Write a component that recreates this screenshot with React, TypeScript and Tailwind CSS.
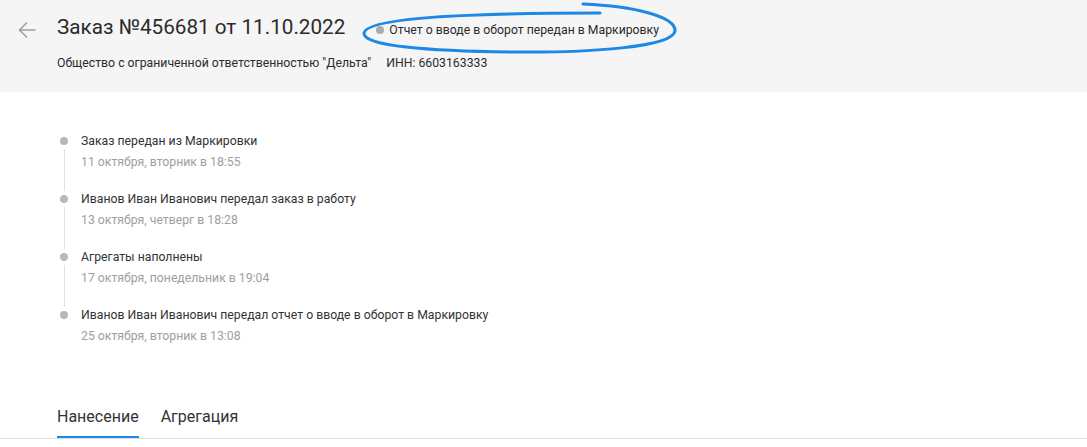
import React from "react";

const events = [
  { title: "Заказ передан из Маркировки", date: "11 октября, вторник в 18:55" },
  { title: "Иванов Иван Иванович передал заказ в работу", date: "13 октября, четверг в 18:28" },
  { title: "Агрегаты наполнены", date: "17 октября, понедельник в 19:04" },
  {
    title: "Иванов Иван Иванович передал отчет о вводе в оборот в Маркировку",
    date: "25 октября, вторник в 13:08",
  },
];

function BackArrow() {
  return (
    <svg width="18" height="16" viewBox="0 0 18 16" fill="none" stroke="#9e9e9e" strokeWidth="1.5" strokeLinecap="round" strokeLinejoin="round">
      <path d="M1.5 8H17" />
      <path d="M8.5 1L1.5 8L8.5 15" />
    </svg>
  );
}

export default function App() {
  return (
    <div className="relative h-[447px] w-[1087px] overflow-hidden bg-white font-['Roboto',sans-serif] text-[#2b2b2b]">
      {/* шапка заказа */}
      <header className="flex h-[92px] bg-[#f5f5f5]">
        <button className="ml-[18px] mt-[22px] h-[16px]">
          <BackArrow />
        </button>
        <div className="ml-[21px] pt-[13px]">
          <div className="flex items-baseline">
            <h1 className="text-[20.7px] leading-[28px]">Заказ №456681 от 11.10.2022</h1>
            <span className="ml-[31px] flex items-baseline text-[12.25px] leading-[20px]">
              <span className="mr-[5px] inline-block h-[8px] w-[8px] rounded-full bg-[#aaaaaa]" />
              Отчет о вводе в оборот передан в Маркировку
            </span>
          </div>
          <div className="mt-[12px] flex text-[12.25px] leading-[20px]">
            <span>Общество с ограниченной ответственностью "Дельта"</span>
            <span className="ml-[15px]">ИНН: 6603163333</span>
          </div>
        </div>
      </header>

      {/* пометка от руки */}
      <svg className="pointer-events-none absolute left-0 top-0" width="1087" height="92" fill="none">
        <path
          d="M583 4 C635 6 676 17 675 31 C673 47 590 53 510 52 C430 51 362 46 364 33 C366 20 440 13 600 13"
          stroke="#1e88e5"
          strokeWidth="3"
          strokeLinecap="round"
        />
      </svg>

      {/* история */}
      <ul className="ml-[60px] mt-[39px]">
        {events.map((ev, i) => (
          <li key={i} className="flex">
            <div className="flex w-[8px] flex-col items-center">
              <span className="mt-[6px] h-[8px] w-[8px] rounded-full bg-[#b8b8b8]" />
              {i < events.length - 1 && <span className="-mb-[2px] mt-[4px] w-px flex-1 bg-[#e0e0e0]" />}
            </div>
            <div className={"ml-[13px] " + (i < events.length - 1 ? "pb-[17px]" : "")}>
              <div className="text-[12.25px] leading-[20px] text-[#333333]">{ev.title}</div>
              <div className="mt-[1px] text-[12.25px] leading-[20px] text-[#9e9e9e]">{ev.date}</div>
            </div>
          </li>
        ))}
      </ul>

      {/* вкладки */}
      <div className="mt-[61px] flex gap-[22px] border-b border-[#e0e0e0] pl-[57px]">
        <button className="border-b-2 border-[#1e88e5] pb-[9px] text-[16px] leading-[20px] text-[#333333]">Нанесение</button>
        <button className="border-b-2 border-transparent pb-[9px] text-[16px] leading-[20px] text-[#333333]">Агрегация</button>
      </div>
    </div>
  );
}
